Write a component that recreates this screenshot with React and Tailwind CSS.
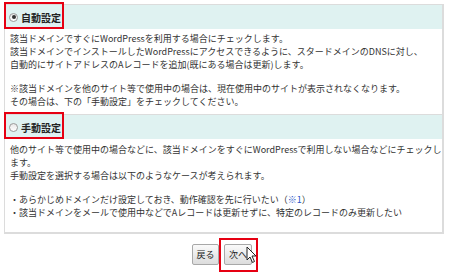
import React from 'react';

const Radio = ({ checked }) => (
	<span className="w-[9px] h-[9px] rounded-full border border-[#9a9a9a] bg-gradient-to-b from-[#e8e8e8] to-[#ffffff] flex items-center justify-center shrink-0">
		{checked && <span className="w-[4px] h-[4px] rounded-full bg-[#333]" />}
	</span>
);

const Header = ({ label, checked }) => (
	<div className="relative h-[24px] bg-[#dff2f1] flex items-center pl-[4px] gap-[3px]">
		<Radio checked={checked} />
		<span className="font-bold text-[10px] text-[#222]">{label}</span>
		<div className="absolute -top-[3px] -left-[1px] w-[60px] h-[27px] border-2 border-[#e60012]" />
	</div>
);

const Cursor = () => (
	<svg className="absolute left-[246px] top-[246px]" width="12" height="18" viewBox="0 0 12 18">
		<path d="M1 1 L1 14 L4 11 L6.5 16.5 L8.5 15.5 L6 10 L10 10 Z" fill="#fff" stroke="#222" strokeWidth="1" strokeLinejoin="round" />
	</svg>
);

export default function App() {
	return (
		<div
			className="relative w-[450px] h-[275px] bg-white text-[9px] leading-[13px] text-[#333]"
			style={{ fontFamily: '"Noto Sans CJK JP", "Noto Sans", sans-serif' }}
		>
			<div className="pt-[4px] pl-[4px]">
				<div className="w-[440px] border border-[#dcdcdc] border-r-2 border-b-2">
					<Header label="自動設定" checked />
					<div className="px-[5px] pt-[3px] pb-[6px] border-b border-[#dcdcdc]">
						<p>該当ドメインですぐにWordPressを利用する場合にチェックします。</p>
						<p>該当ドメインでインストールしたWordPressにアクセスできるように、スタードメインのDNSに対し、</p>
						<p>自動的にサイトアドレスのAレコードを追加(既にある場合は更新)します。</p>
						<p className="mt-[11px]">※該当ドメインを他のサイト等で使用中の場合は、現在使用中のサイトが表示されなくなります。</p>
						<p>その場合は、下の「手動設定」をチェックしてください。</p>
					</div>
					<Header label="手動設定" />
					<div className="px-[5px] pt-[4px] pb-[13px]">
						<p>
							<span className="whitespace-nowrap">
								他のサイト等で使用中の場合などに、該当ドメインをすぐにWordPressで利用しない場合などにチェックし
							</span>
							<br />
							ます。
						</p>
						<p>手動設定を選択する場合は以下のようなケースが考えられます。</p>
						<p className="mt-[11px]">・あらかじめドメインだけ設定しておき、動作確認を先に行いたい（<span className="text-[#2a55c9]">※1</span>）</p>
						<p>・該当ドメインをメールで使用中などでAレコードは更新せずに、特定のレコードのみ更新したい</p>
					</div>
				</div>
			</div>
			<div className="flex justify-center gap-[5px] mt-[10px] pr-[6px]">
				<button className="w-[27px] h-[21px] border border-[#a8a8a8] rounded-[2px] bg-gradient-to-b from-[#fafafa] to-[#dcdcdc] text-[9px] text-[#222]">
					戻る
				</button>
				<div className="relative">
					<button className="w-[28px] h-[21px] border border-[#a8a8a8] rounded-[2px] bg-gradient-to-b from-[#fafafa] to-[#dcdcdc] text-[9px] text-[#222]">
						次へ
					</button>
					<div className="absolute -left-[5px] -right-[6px] -top-[6px] -bottom-[7px] border-2 border-[#e60012]" />
				</div>
			</div>
			<Cursor />
		</div>
	);
}
